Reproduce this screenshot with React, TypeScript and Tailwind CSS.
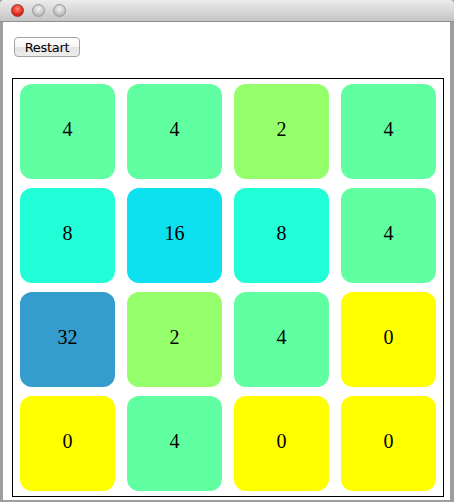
const tiles = [4, 4, 2, 4, 8, 16, 8, 4, 32, 2, 4, 0, 0, 4, 0, 0];

const tileColor: Record<number, string> = {
  0: 'bg-[#ffff00]',
  2: 'bg-[#96ff6c]',
  4: 'bg-[#60ffa2]',
  8: 'bg-[#22ffd8]',
  16: 'bg-[#0de1ef]',
  32: 'bg-[#349dce]',
};

const App = () => {
  return (
    <div className="w-[454px] h-[502px] flex flex-col bg-[#9d9d9d] overflow-hidden">
      <div className="h-[22px] shrink-0 flex items-center gap-[8px] pl-[11px] bg-gradient-to-b from-[#ececec] to-[#c4c4c4] border-b border-[#8f8f8f] rounded-t-[4px]">
        <span className="w-[13px] h-[13px] rounded-full bg-[radial-gradient(circle_at_50%_35%,#ff8a7a,#e0281c_60%,#9c1a10)] border border-[#a8362c]" />
        <span className="w-[13px] h-[13px] rounded-full bg-[radial-gradient(circle_at_50%_35%,#f4f4f4,#c4c4c4_60%,#9a9a9a)] border border-[#999]" />
        <span className="w-[13px] h-[13px] rounded-full bg-[radial-gradient(circle_at_50%_35%,#f4f4f4,#c4c4c4_60%,#9a9a9a)] border border-[#999]" />
      </div>
      <div className="flex-1 ml-[3px] mr-[4px] mb-[2px] bg-white flex flex-col pl-[9px] pt-[15px]">
        <button className="ml-[2px] w-[66px] h-[20px] rounded-[4px] border border-[#a3a3a3] bg-[linear-gradient(#ffffff_0%,#f6f6f6_50%,#e4e4e4_51%,#ececec_100%)] text-[13px] leading-none text-black font-['DejaVu_Sans',sans-serif] tracking-[-0.3px] flex items-center justify-center">
          Restart
        </button>
        <div className="mt-[21px] w-[432px] border border-black px-[7px] pt-[5px] pb-[5px] grid grid-cols-[repeat(4,95px)] gap-x-[12px] gap-y-[9px]">
          {tiles.map((v, i) => (
            <div
              key={i}
              className={`h-[95px] pb-[5px] rounded-[12px] flex items-center justify-center text-[20px] text-black font-['Liberation_Serif',serif] ${tileColor[v]}`}
            >
              {v}
            </div>
          ))}
        </div>
      </div>
    </div>
  );
};

export default App;
